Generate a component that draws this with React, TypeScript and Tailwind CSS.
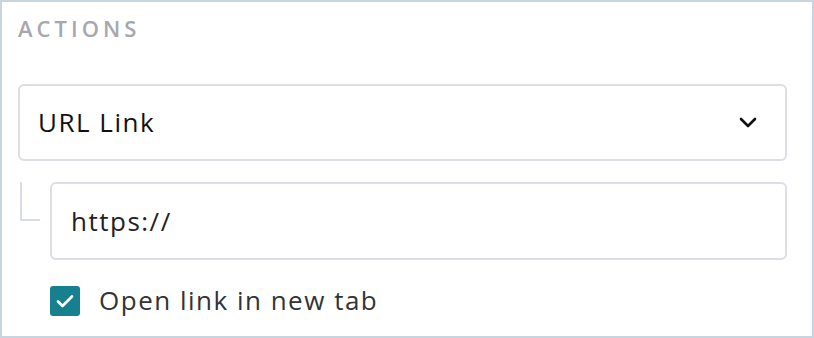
import React, { useState } from "react";

const App = () => {
  const [checked, setChecked] = useState(true);

  return (
    <div
      className="w-[814px] h-[338px] border-2 border-[#c8d5df] bg-white px-4"
      style={{ fontFamily: "'Open Sans', Lato, sans-serif" }}
    >
      <div className="pt-[12px] h-[82px] text-[22px] leading-[28px] font-semibold tracking-[4px] text-[#a7a7ad]">
        ACTIONS
      </div>
      <div className="flex items-center justify-between w-[769px] h-[77px] border-2 border-[#dcdde6] rounded-[6px] pl-[18px] pr-[28px]">
        <span className="text-[26px] tracking-[1.5px] text-[#111]">URL Link</span>
        <svg width="18" height="11" viewBox="0 0 18 11" fill="none">
          <path d="M2 2l7 7 7-7" stroke="#111" strokeWidth="2.6" strokeLinecap="round" strokeLinejoin="round" />
        </svg>
      </div>
      <div className="flex mt-[21px]">
        <div className="w-[32px] shrink-0 pl-[2px]">
          <div className="w-[20px] h-[39px] border-l-2 border-b-2 border-[#d9dce6]" />
        </div>
        <div className="flex items-center w-[737px] h-[78px] border-2 border-[#dcdde6] rounded-[6px] pl-[19px]">
          <span className="text-[26px] tracking-[1.5px] text-[#222]">https://</span>
        </div>
      </div>
      <label className="flex items-center mt-[21px] ml-[32px] gap-[19px] cursor-pointer">
        <button
          onClick={() => setChecked(!checked)}
          className="w-[30px] h-[30px] rounded-[3px] bg-[#17808f] flex items-center justify-center"
        >
          {checked && (
            <svg width="18" height="14" viewBox="0 0 18 14" fill="none">
              <path d="M2 7.5l4.5 4.5L16 2.5" stroke="#fff" strokeWidth="2.6" strokeLinecap="round" strokeLinejoin="round" />
            </svg>
          )}
        </button>
        <span className="text-[26px] tracking-[1.5px] text-[#333]">Open link in new tab</span>
      </label>
    </div>
  );
};

export default App;
